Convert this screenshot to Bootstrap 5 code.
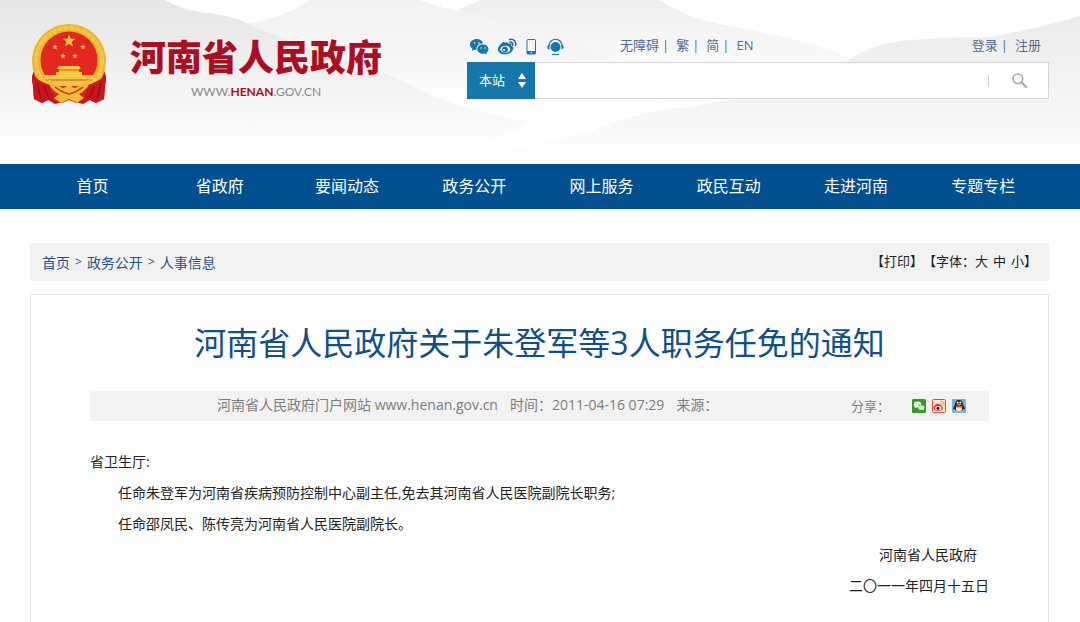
<!DOCTYPE html>
<html lang="zh-CN">
<head>
<meta charset="utf-8">
<meta name="viewport" content="width=device-width, initial-scale=1">
<title>河南省人民政府关于朱登军等3人职务任免的通知</title>
<link href="https://cdn.jsdelivr.net/npm/bootstrap@5.3.0/dist/css/bootstrap.min.css" rel="stylesheet">
<style>
  :root { --navy: #00508f; --teal: #1777a8; --ink-blue: #4f6d96; }
  body { font-family: "Open Sans", "Noto Sans CJK SC", sans-serif; font-size: 14px; color: #222; background: #fff; }
  a { text-decoration: none; color: inherit; }
  .page-wrap { padding-left: 30px; padding-right: 31px; }
  .site-head { height: 164px; isolation: isolate; }
  .head-art { z-index: -1; }
  .brand-block { width: 437px; padding-top: 23px; }
  .brand-text { padding: 13px 0 0 22px; }
  .brand-name { font-size: 36px; line-height: 44px; font-weight: 900; color: #ab0e22; }
  .brand-url { font-family: Lato, sans-serif; font-size: 12px; line-height: 24px; color: #8a8a8a; }
  .brand-url b { color: #ab0e22; }
  .tools-block { padding-top: 35px; }
  .top-links { font-size: 13px; line-height: 20px; color: var(--ink-blue); height: 27px; }
  .link-row { gap: 7px; }
  .link-row .sep { padding-left: 3px; }
  .tool-icons { gap: 8px; width: 153px; padding-left: 2px; color: var(--teal); }
  .search-bar { height: 37px; border: 1px solid #d5d5d5; }
  .scope-box { width: 68px; margin: -1px 0 -1px -1px; background: var(--teal); }
  .scope-box select { appearance: none; background: none; border: 0; color: #fff; font-size: 13px; padding-left: 12px; }
  .scope-box svg { right: 8px; top: 11px; pointer-events: none; }
  .search-bar input { min-width: 0; border: 0; outline: 0; background: #fff; padding: 0 12px; }
  .search-bar .go { width: 60px; border: 0; background: #fff; }
  .search-bar .go i { width: 1px; height: 12px; background: #d0d0d0; }
  .main-nav { background: var(--navy); }
  .main-nav .page-wrap { padding-left: 29px; padding-right: 33px; }
  .main-nav a { color: #fff; font-size: 16px; line-height: 45px; padding: 0; }
  .crumb-bar { margin-top: 34px; height: 38px; background: #f2f2f2; padding: 0 12px; color: #1d5588; }
  .crumb-bar nav { gap: 5px; }
  .crumb-bar nav span { font-size: 12px; }
  .crumb-bar .page-ops { font-size: 13px; color: #222; }
  .page-ops .sizes { gap: 5px; }
  .page-ops button { border: 0; background: none; padding: 0; color: inherit; }
  .article-box { margin-top: 13px; border: 1px solid #e6e6e6; border-bottom: 0; padding: 24px 59px 20px; min-height: 328px; }
  .article-box h1 { font-size: 32px; line-height: 48px; margin: 0 0 24px; color: #0f4f8a; font-weight: 400; }
  .meta-bar { background: #f2f2f2; color: #7c7c7c; height: 30px; line-height: 28px; }
  .meta-bar .source { gap: 12px; padding: 0 0 2px 127px; }
  .meta-bar .share { font-size: 13px; gap: 6px; padding-right: 23px; }
  .doc-text { padding-top: 25px; line-height: 31px; }
  .doc-text p { margin: 0; }
  .doc-text .body-line { text-indent: 2em; }
  .doc-text .signer { padding-right: 12px; }
</style>
</head>
<body>
<header class="site-head position-relative">
  <svg class="head-art position-absolute top-0 start-0 w-100 h-100" viewBox="0 0 1080 164" preserveAspectRatio="none" aria-hidden="true">
    <defs>
      <linearGradient id="g1" x1="0" y1="0" x2="0" y2="1"><stop offset="0" stop-color="#e6e6e6"/><stop offset=".45" stop-color="#f0f0f0"/><stop offset=".9" stop-color="#fff"/></linearGradient>
      <linearGradient id="g2" x1="0" y1="0" x2="0" y2="1"><stop offset="0" stop-color="#ededed"/><stop offset=".75" stop-color="#fff"/></linearGradient>
      <linearGradient id="g3" x1="0" y1="0" x2="0" y2="1"><stop offset="0" stop-color="#f1f1f1"/><stop offset=".35" stop-color="#f4f4f4"/><stop offset=".9" stop-color="#fff"/></linearGradient>
      <linearGradient id="g4" x1="0" y1="0" x2="0" y2="1"><stop offset="0" stop-color="#ebebeb"/><stop offset="1" stop-color="#fdfdfd"/></linearGradient>
      <linearGradient id="g5" x1="0" y1="0" x2="0" y2="1"><stop offset="0" stop-color="#f3f3f3"/><stop offset="1" stop-color="#fff"/></linearGradient>
    </defs>
    <rect width="1080" height="164" fill="#fff"/>
    <path d="M458 9Q468 6 480 0H658Q672 8 695 18Q735 28 780 36Q830 48 870 66L900 110H560Z" fill="url(#g2)"/>
    <path d="M245 24Q285 18 310 0H420Q445 10 470 13Q515 30 545 35Q590 42 640 80L680 120H300Z" fill="url(#g3)"/>
    <path d="M0 0H165Q180 9 200 12Q235 15 256 28Q290 40 330 57Q380 68 420 90Q460 110 530 122Q490 150 400 164H0Z" fill="url(#g1)"/>
    <path d="M845 62Q870 45 900 41Q945 37 990 37Q1040 28 1080 16V164H900Z" fill="url(#g4)"/>
    <path d="M470 158Q545 145 590 132Q630 112 690 107Q730 98 780 94H1080V164H470Z" fill="url(#g5)"/>
  </svg>
  <div class="page-wrap d-flex">
    <a href="#" class="brand-block d-flex flex-shrink-0">
      <svg width="78" height="83" viewBox="0 0 78 83" role="img" aria-label="国徽">
        <defs><path id="st" d="M0-6 1.500-2H5.800L2.400 .7 3.600 5 0 2.400-3.600 5-2.400 .7-5.800-2H-1.500Z"/></defs>
        <path d="M5 46Q0 54 3 62L4 76 12 80 18 77 25 81 39 77 53 81 60 77 66 80 74 76 75 62Q78 54 73 46Z" fill="#c9151b"/>
        <path d="M8 60 12 76M16 66 20 76M70 60 66 76M62 66 58 76" stroke="#93121a" stroke-width="1.500"/>
        <circle cx="39" cy="38" r="37" fill="#edb52f"/>
        <circle cx="39" cy="38" r="33" fill="none" stroke="#f4c845" stroke-width="4" stroke-dasharray="5 1"/>
        <circle cx="39" cy="37" r="28.500" fill="#e32620"/>
        <path d="M2 52Q10 59 20 62L25 79 18 77 12 80 4 76ZM76 52Q68 59 58 62L53 79 60 77 66 80 74 76Z" fill="#c9151b"/>
        <path d="M7 60 11 76M14 63 19 76M71 60 67 76M64 63 59 76" stroke="#93121a" stroke-width="1.500"/>
        <g fill="#f6ca42"><use href="#st" transform="translate(39 18)scale(1.100)"/><use href="#st" transform="translate(25 24)scale(.5)"/><use href="#st" transform="translate(53 24)scale(.5)"/><use href="#st" transform="translate(33 33)scale(.5)"/><use href="#st" transform="translate(45 33)scale(.5)"/>
        <path d="M29 43h20l2 3h-2v3h3v3h12v6l-8 5H22l-8-5v-6h12v-3h3v-3h-2Z"/></g>
        <path d="M28 47h22M16 57h46" stroke="#df4b22"/>
        <path d="M18 61Q27 71 39 72 51 71 60 61L53 78 46 80 39 77 32 80 25 78Z" fill="#d5201d"/>
        <path d="M17 56Q27 59 32 66L39 62 46 66Q51 59 61 56 58 67 49 71L54 75 47 80 39 76 31 80 24 75 29 71Q20 67 17 56Z" fill="#f2bd36"/>
        <path d="M25 64Q33 70 39 71 45 70 53 64" fill="none" stroke="#d5201d" stroke-width="1.500"/>
      </svg>
      <span class="brand-text d-block text-center">
        <span class="brand-name d-block">河南省人民政府</span>
        <span class="brand-url d-block">WWW.<b>HENAN</b>.GOV.CN</span>
      </span>
    </a>
    <div class="tools-block flex-grow-1">
      <div class="top-links d-flex">
        <div class="tool-icons d-flex">
          <a href="#" aria-label="微信"><svg width="20" height="20" viewBox="0 0 20 20"><path d="M8 2C3.800 2 1 4.500 1 7.600c0 1.800 1 3.300 2.500 4.300L3 14l2.500-1.200 2 .3C6.800 9.200 10 6.500 14 6.600 13.300 3.900 11 2 8 2Z" fill="#1777a8"/><path d="M13.800 7.500c3.300 0 5.600 2 5.600 4.700 0 1.500-.8 2.800-2 3.600l.4 1.900-2.200-1.100c-4 .8-7.300-1.300-7.300-4.400 0-2.700 2.400-4.700 5.500-4.700Z" fill="#1777a8"/><g fill="#fff"><circle cx="5.500" cy="6" r=".8"/><circle cx="10" cy="6" r=".8"/><circle cx="12" cy="11" r=".7"/><circle cx="16" cy="11" r=".7"/></g></svg></a>
          <a href="#" aria-label="微博"><svg width="20" height="20" viewBox="0 0 20 20"><path d="M8 6c1.500-1 3-1 3.200.7 2-.6 4 0 3.100 2.200 2 .6 2.600 1.800 1.800 3.600C14.800 15.700 11.500 17.500 8 17.500c-4 0-7-2-7-5.200C1 9.500 5.200 4.600 7.500 5Z" fill="#1777a8"/><ellipse cx="8.300" cy="12.300" rx="4.900" ry="3.500" fill="#fff"/><circle cx="8" cy="12.500" r="2.900" fill="#1777a8"/><circle cx="7" cy="13" r="1" fill="#fff"/><path d="M12.500 2.500c4-1 7.200 2 6 6M12.800 5.200c2-.3 3.300 1 2.900 2.900" fill="none" stroke="#1777a8" stroke-width="1.600" stroke-linecap="round"/></svg></a>
          <a href="#" aria-label="手机"><svg width="13" height="20" viewBox="0 0 13 20"><path d="M3 2.500h6.500a1 1 0 0 1 1 1V16a1 1 0 0 1-1 1H3a1 1 0 0 1-1-1V3.500a1 1 0 0 1 1-1Z" fill="none" stroke="#1777a8"/><path d="M2 14h9v3H2Z" fill="#1777a8"/><circle cx="6.300" cy="15.500" r=".8" fill="#fff"/></svg></a>
          <a href="#" aria-label="客服"><svg width="20" height="20" viewBox="0 0 20 20"><circle cx="9.500" cy="10" r="5" fill="#1777a8"/><path d="M3 9c0-9 13-9 13 0M6 17.500h7" fill="none" stroke="#1777a8" stroke-width="1.200"/><path d="M3.500 7.500v5C.6 12.500.6 8 3.500 7.500ZM15.500 7.500v5c2.900 0 2.900-4.500 0-5Z" fill="#1777a8"/></svg></a>
        </div>
        <div class="link-row d-flex"><span><a href="#">无障碍</a><span class="sep">|</span></span><span><a href="#">繁</a><span class="sep">|</span></span><span><a href="#">简</a><span class="sep">|</span></span><a href="#">EN</a></div>
        <div class="link-row ms-auto d-flex pe-1 me-1"><span><a href="#">登录</a><span class="sep">|</span></span><a href="#">注册</a></div>
      </div>
      <form class="search-bar d-flex" onsubmit="return false">
        <div class="scope-box position-relative flex-shrink-0">
          <select class="w-100 h-100" aria-label="搜索范围"><option>本站</option></select>
          <svg class="position-absolute" width="10" height="15" viewBox="0 0 10 15"><path d="M5 0 9 6H1ZM1 9H9L5 15Z" fill="#fff"/></svg>
        </div>
        <input class="flex-grow-1" type="text" aria-label="搜索">
        <button class="go d-flex align-items-center p-0" type="submit" aria-label="搜索"><i></i>
          <svg class="mx-auto" width="20" height="20" viewBox="0 0 18 18" fill="none" stroke="#aaa"><circle cx="8" cy="7" r="4.300" stroke-width="1.500"/><path d="m11 10 5 5" stroke-width="2"/></svg>
        </button>
      </form>
    </div>
  </div>
</header>

<nav class="main-nav">
  <div class="page-wrap">
    <div class="nav nav-fill nav-justified flex-nowrap">
      <a class="nav-link" href="#">首页</a><a class="nav-link" href="#">省政府</a><a class="nav-link" href="#">要闻动态</a><a class="nav-link" href="#">政务公开</a><a class="nav-link" href="#">网上服务</a><a class="nav-link" href="#">政民互动</a><a class="nav-link" href="#">走进河南</a><a class="nav-link" href="#">专题专栏</a>
    </div>
  </div>
</nav>

<main class="page-wrap">
  <div class="crumb-bar d-flex align-items-center justify-content-between">
    <nav class="d-flex align-items-center" aria-label="当前位置"><a href="#">首页</a><span>&gt;</span><a href="#">政务公开</a><span>&gt;</span><a href="#">人事信息</a></nav>
    <div class="page-ops d-flex"><button type="button">【打印】</button><span>【字体：</span><span class="sizes d-flex"><button type="button">大</button><button type="button">中</button><button type="button">小</button></span><span>】</span></div>
  </div>
  <article class="article-box">
    <h1 class="text-center">河南省人民政府关于朱登军等3人职务任免的通知</h1>
    <div class="meta-bar d-flex align-items-center justify-content-between">
      <div class="source d-flex"><span>河南省人民政府门户网站 www.henan.gov.cn</span><span>时间：2011-04-16 07:29</span><span>来源：</span></div>
      <div class="share d-flex align-items-center"><span class="me-3">分享：</span>
        <a class="d-flex" href="#" aria-label="分享到微信"><svg width="14" height="14" viewBox="0 0 14 14"><rect width="14" height="14" rx="1.500" fill="#2f9e1c"/><ellipse cx="5.500" cy="5.500" rx="3.800" ry="3" fill="#fff"/><ellipse cx="9.200" cy="8.500" rx="3.300" ry="2.600" fill="#fff" stroke="#2f9e1c" stroke-width=".6"/><path d="m3 7-.2 2L5 8M10 10l1.700 1.800L11.500 9" fill="#fff"/><g fill="#2f9e1c"><circle cx="4.300" cy="5" r=".6"/><circle cx="7" cy="5" r=".6"/><circle cx="8.200" cy="8" r=".5"/><circle cx="10.300" cy="8" r=".5"/></g></svg></a>
        <a class="d-flex" href="#" aria-label="分享到微博"><svg width="14" height="14" viewBox="0 0 14 14"><rect x=".5" y=".5" width="13" height="13" rx="1" fill="#fde9d8" stroke="#d8502f"/><path d="M5 5c1-.7 2-.4 2 .5 1.800-.3 2.700.3 2.200 1.500C12 8 11.500 12 6.500 12 3.500 12 1.500 10.700 1.500 9S3.500 5.300 5 5Z" fill="#d5282e"/><ellipse cx="6.200" cy="9.200" rx="3.200" ry="2.100" fill="#fff"/><circle cx="6" cy="9.300" r="1.500" fill="#222"/><path d="M8.500 2.500c2.500-.4 4 1.300 3.400 3.800M8.800 4.300c1 0 1.700.6 1.500 1.700" fill="none" stroke="#e58a2b"/></svg></a>
        <a class="d-flex" href="#" aria-label="分享到QQ"><svg width="14" height="14" viewBox="0 0 14 14"><rect width="14" height="14" rx="1" fill="#76aede"/><path d="M7 1c2.700 0 3.900 1.600 3.900 4 0 1 2 3 2 5-.5.800-1 .3-1.500-.3L10 12H4L2.600 9.700c-.5.600-1 1.100-1.500.3 0-2 2-4 2-5C3.100 2.600 4.300 1 7 1Z" fill="#1c2430"/><ellipse cx="7" cy="9.600" rx="3" ry="2.600" fill="#fff"/><path d="M3.500 6.500Q7 8 10.500 6.500V8Q7 9 3.500 8Z" fill="#d9302c"/><circle cx="5.600" cy="3.600" r="1" fill="#fff"/><circle cx="8.400" cy="3.600" r="1" fill="#fff"/><ellipse cx="7" cy="5.600" rx="2.200" ry=".8" fill="#f6a821"/><path d="M2.500 12.500Q4.500 11 6.500 12.500ZM7.500 12.500Q9.500 11 11.500 12.500Z" fill="#f6a821" stroke="#f6a821"/></svg></a>
      </div>
    </div>
    <div class="doc-text">
      <p>省卫生厅:</p>
      <p class="body-line">任命朱登军为河南省疾病预防控制中心副主任,免去其河南省人民医院副院长职务;</p>
      <p class="body-line">任命邵凤民、陈传亮为河南省人民医院副院长。</p>
      <p class="signer text-end">河南省人民政府</p>
      <p class="text-end">二〇一一年四月十五日</p>
    </div>
  </article>
</main>
<script src="https://cdn.jsdelivr.net/npm/bootstrap@5.3.0/dist/js/bootstrap.bundle.min.js"></script>
</body>
</html>
